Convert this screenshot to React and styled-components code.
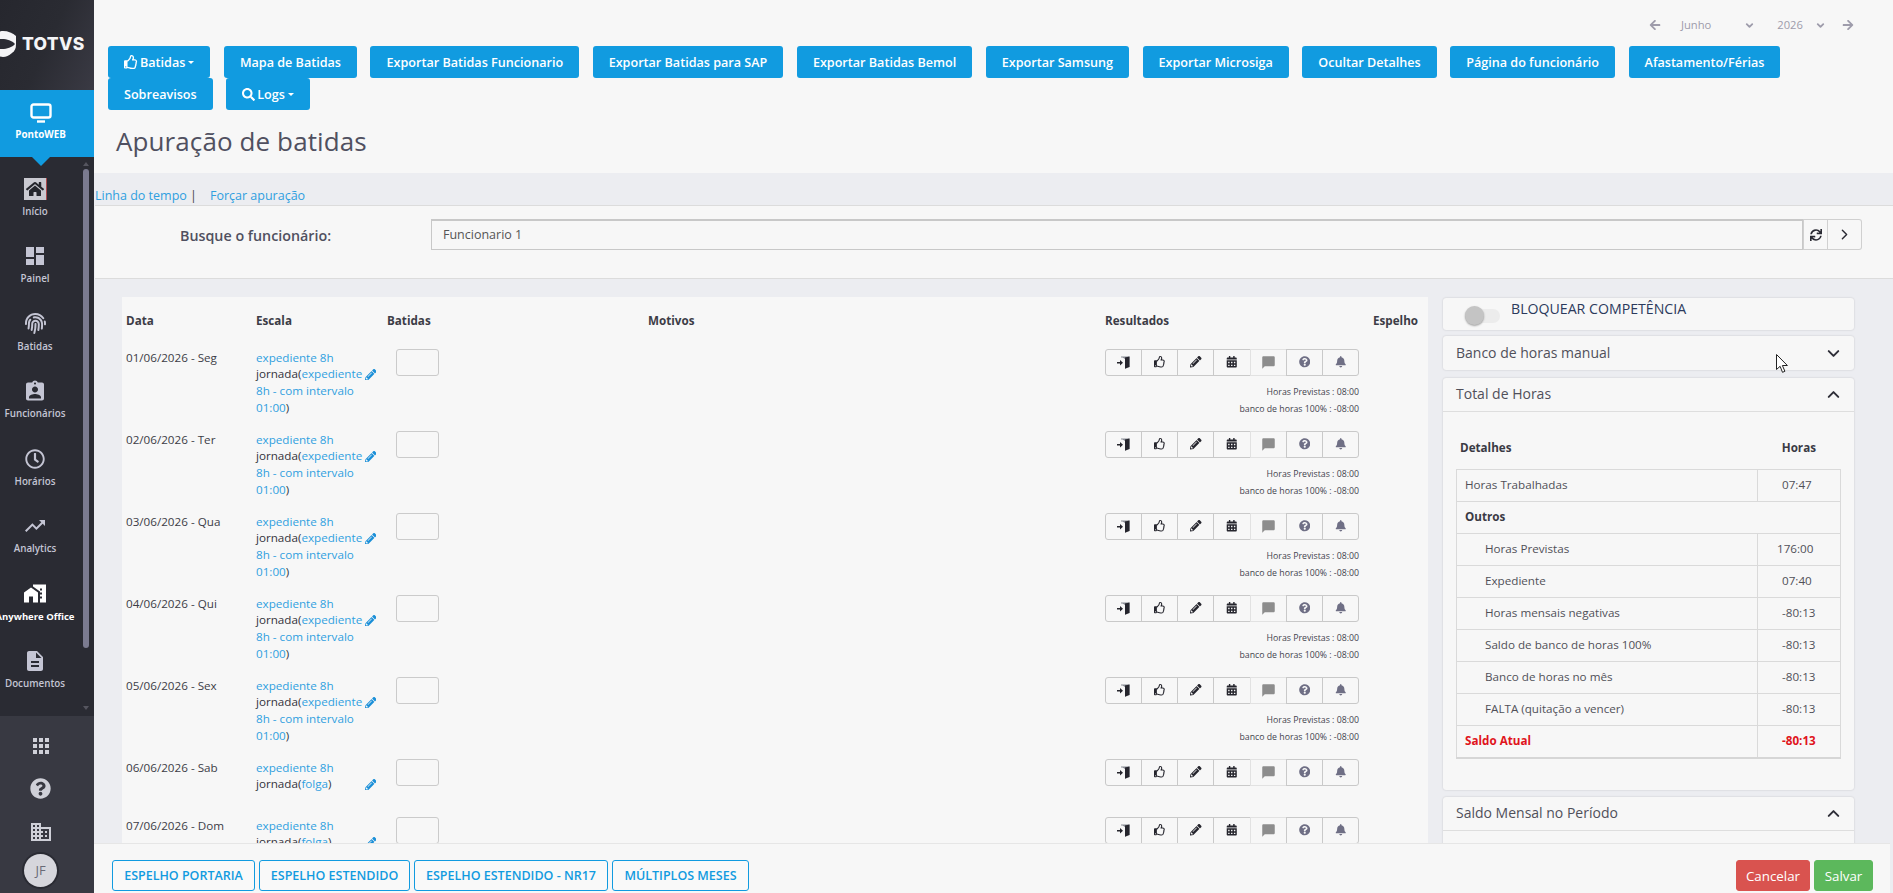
import React from "react";
import styled, { createGlobalStyle } from "styled-components";
import {
  FaHome, FaFingerprint, FaRegClock, FaQuestionCircle, FaRegThumbsUp, FaSearch, FaPencilAlt,
  FaCalendarAlt, FaBell, FaSync, FaArrowLeft, FaArrowRight,
} from "react-icons/fa";
import {
  MdDashboard, MdAssignmentInd, MdTrendingUp, MdHomeWork, MdDescription, MdApps, MdBusiness, MdChatBubble,
} from "react-icons/md";
import { FiChevronDown, FiChevronUp, FiChevronRight } from "react-icons/fi";

const BLUE = "#119be0";
const BAND = "#ecedf1";
const PAPER = "#f7f7f7";

const Global = createGlobalStyle`
  html, body { margin: 0; padding: 0; height: 100%; overflow: hidden; background: ${BAND}; }
  body { font-family: "Open Sans", "Liberation Sans", sans-serif; font-size: 11.67px; line-height: 16.67px; color: #333; }
  * { box-sizing: border-box; }
`;

const Page = styled.div`display: flex; width: 1893px; height: 893px; overflow: hidden;`;

/* ---------- sidebar ---------- */
const Sidebar = styled.aside`
  width: 94px; flex: none; height: 893px; display: flex; flex-direction: column; background: #2a2b33; position: relative; z-index: 2;
`;
const LogoBox = styled.div`
  height: 90px; flex: none; display: flex; align-items: flex-start; padding-top: 31px; overflow: hidden;
  background: linear-gradient(115deg, #26272e 0%, #2a2b32 50%, #3a3a44 100%);
`;
const LogoMark = styled.svg`width: 28px; height: 26px; flex: none; margin-left: -12px; color: #f4f4f6;`;
const LogoWord = styled.span`
  font-family: "Inter", "Liberation Sans", sans-serif; font-weight: 800; font-size: 17.5px; line-height: 26px; color: #f4f4f6; margin-left: 6px; letter-spacing: 0.3px;
`;
const ActiveItem = styled.div`
  height: 67px; flex: none; background: ${BLUE}; color: #fff; position: relative; display: flex; flex-direction: column; align-items: center; padding: 13px 13px 0 0;
  &::after {
    content: ""; position: absolute; left: 32px; bottom: -9px; border-left: 9px solid transparent; border-right: 9px solid transparent; border-top: 9px solid ${BLUE};
  }
`;
const ActiveLabel = styled.span`font-size: 9.8px; font-weight: 700; line-height: 13px; margin-top: 5px;`;
const Nav = styled.nav`flex: 1; position: relative; overflow: hidden; min-height: 0;`;
const NavItem = styled.div`
  width: 70px; height: 67.5px; display: flex; flex-direction: column; align-items: center; padding-top: 20.5px; color: ${p => (p.$bright ? "#fff" : "#c4c5d4")};
`;
const NavIcon = styled.span`
  width: 24px; height: 22px; display: flex; align-items: center; justify-content: center; font-size: ${p => p.$size || 22}px;
  ${p => p.$boxed && `background: #c9c9d1; color: #24252c; border-right: 1px solid #a8484c; width: 23px;`}
`;
const NavLabel = styled.span`
  font-size: ${p => (p.$bright ? 9.5 : 9.8)}px; font-weight: ${p => (p.$bright ? 700 : 600)}; line-height: 12px; margin-top: 6px; white-space: nowrap;
`;
const ScrollThumb = styled.div`
  position: absolute; left: 83px; top: 12px; width: 6px; height: 479px; border-radius: 3px; background: #7b7b90;
`;
const ScrollArrow = styled.div`
  position: absolute; left: 83px; ${p => p.$up ? "top: 5px; border-bottom: 4px solid #55555f;" : "bottom: 6px; border-top: 4px solid #55555f;"}
  border-left: 3px solid transparent; border-right: 3px solid transparent;
`;
const SideBottom = styled.div`
  height: 177px; flex: none; background: #383942; display: flex; flex-direction: column; align-items: center; padding: 8px 13px 0 0; color: #cfd0d8;
`;
const BottomIcon = styled.div`height: 43px; flex: none; display: flex; align-items: center; justify-content: center; font-size: ${p => p.$size || 22}px;`;
const Avatar = styled.div`
  width: 33px; height: 33px; flex: none; border-radius: 50%; background: #d6d6dc; color: #6a6a76; box-shadow: 0 0 0 2px #2a2b33;
  display: flex; align-items: center; justify-content: center; font-size: 13px; margin-top: 1px;
`;

/* ---------- main / header ---------- */
const Main = styled.main`flex: 1; min-width: 0; height: 893px; display: flex; flex-direction: column; background: ${BAND};`;
const Header = styled.header`height: 173px; flex: none; background: ${PAPER};`;
const Picker = styled.div`
  height: 46px; display: flex; align-items: flex-start; padding: 18px 0 0 1555px; color: #9e9cab; font-size: 11.2px; line-height: 14px;
`;
const PickIcon = styled.span`display: inline-flex; align-items: center; height: 14px; font-size: ${p => p.$size || 12}px; margin-left: ${p => p.$ml || 0}px;`;
const PickText = styled.span`margin-left: ${p => p.$ml || 0}px;`;
const Toolbar = styled.div`display: flex; flex-wrap: wrap; column-gap: 13.5px; padding: 0 100px 0 14px;`;
const ToolButton = styled.button`
  height: 32px; padding: 0 16px; border: 0; border-radius: 3px; background: ${BLUE}; color: #fff; font-family: inherit; font-size: 12.6px; font-weight: 600; white-space: nowrap;
  display: inline-flex; align-items: center; gap: 2px;
`;
const Caret = styled.span`
  display: inline-block; margin-left: 1px; border-left: 3px solid transparent; border-right: 3px solid transparent; border-top: 3px solid #fff;
`;
const Title = styled.h1`
  margin: 15px 0 0 22px; font-size: 26px; font-weight: 400; line-height: 33px; color: #505060; letter-spacing: 0.1px;
`;

/* ---------- body ---------- */
const Body = styled.div`flex: 1; min-height: 0; overflow: hidden;`;
const Links = styled.div`height: 32px; padding: 14px 0 0 1px; line-height: 17px; font-size: 12.5px; color: #444; white-space: nowrap;`;
const Link = styled.a`color: #2f9fe0; margin-left: ${p => p.$ml || 0}px;`;
const SearchCard = styled.section`
  height: 74px; margin-left: 1px; background: ${PAPER}; border-top: 1px solid #dcdcdc; border-bottom: 1px solid #dcdcdc; display: flex; align-items: flex-start; padding: 13px 31px 0 85px;
`;
const SearchLabel = styled.label`width: 251px; flex: none; font-size: 14.3px; font-weight: 600; line-height: 33px; color: #50505f;`;
const SearchInput = styled.div`
  flex: 1; height: 31px; border: 1px solid #c8c8c8; border-top-width: 2px; background: ${PAPER}; padding-left: 11px; line-height: 28px; font-size: 12.5px; color: #555;
`;
const AddOn = styled.div`
  width: ${p => p.$w}px; height: 31px; flex: none; border: 1px solid #d0d0d0; ${p => p.$last && "border-left: 0; border-radius: 0 3px 3px 0;"}
  display: flex; align-items: center; justify-content: center; color: #2a2a33; font-size: ${p => (p.$last ? 17 : 12)}px;
`;
const Columns = styled.div`display: flex; align-items: flex-start; gap: 15px; margin: 18px 0 0 28px; padding-right: 39px;`;
const TableCard = styled.section`flex: 1; min-width: 0; height: 600px; background: ${PAPER}; padding: 16px 0 0 4px;`;
const RowGrid = styled.div`display: grid; grid-template-columns: 130px 131px 261px 457px 268px 1fr;`;
const HeadRow = styled(RowGrid)`
  font-weight: 700; color: #3c3c46; padding-bottom: 20px;
`;
const DayRow = styled(RowGrid)`padding-bottom: 13.5px; min-height: 58px;`;
const DateCell = styled.div`color: #3c3c46;`;
const ScaleCell = styled.div`width: 121px; color: #33333b;`;
const Blue = styled.span`color: #2f9fe0;`;
const Pencil = styled.span`float: right; width: 13px; height: 16px; display: flex; align-items: center; justify-content: flex-end; color: #1a8fd8; font-size: 11.5px; margin: 0 1px 0 0;`;
const PunchBox = styled.div`width: 43px; height: 27px; margin: -1px 0 0 9px; border: 1px solid #cbcbcb; border-radius: 3px; background: ${PAPER};`;
const ResultCell = styled.div``;
const BtnGroup = styled.div`display: flex; width: 254px; height: 27px; margin-top: -1px;`;
const GroupBtn = styled.div`
  flex: 1; height: 27px; margin-left: -1px; border: 1px solid ${p => (p.$faint ? "#e2e2e2" : "#c9c9c9")}; background: ${PAPER}; color: ${p => p.$color || "#25252d"};
  display: flex; align-items: center; justify-content: center; font-size: 11.5px;
  &:first-child { margin-left: 0; border-radius: 3px 0 0 3px; }
  &:last-child { border-radius: 0 3px 3px 0; }
`;
const Summary = styled.div`margin-top: 8.5px; text-align: right; width: 254px; font-size: 8.75px; line-height: 17px; color: #44444e;`;

/* ---------- right column ---------- */
const Side = styled.div`width: 411px; flex: none; display: flex; flex-direction: column; gap: 6px; margin-top: 1px;`;
const Panel = styled.section`
  background: ${PAPER}; border-radius: 3px; box-shadow: 0 0 2px rgba(0,0,0,.18); position: relative;
  margin-top: ${p => p.$mt || 0}px;
`;
const ToggleRow = styled(Panel)`height: 32px; padding: 0 0 0 22px; display: flex; align-items: flex-start;`;
const Track = styled.span`
  width: 35px; height: 14px; margin-top: 11px; border-radius: 7px; background: #ececec; position: relative; flex: none;
`;
const Knob = styled.span`
  position: absolute; left: 0; top: -3px; width: 19px; height: 19px; border-radius: 50%; background: #c4c4c4; box-shadow: 0 1px 2px rgba(0,0,0,.35);
`;
const ToggleText = styled.span`margin-left: 11px; font-size: 14.15px; line-height: 22px; color: #2c3a5c; white-space: nowrap;`;
const PanelHead = styled.div`
  height: 34px; display: flex; align-items: center; justify-content: space-between; padding: 0 11px 0 13px; font-size: 14px; color: #50505a;
  ${p => p.$line && "border-bottom: 1px solid #dedede;"}
`;
const Chevron = styled.span`display: inline-flex; font-size: 19px; color: #2e2e38;`;
const PanelBody = styled.div`padding: 24px 13px 31px;`;
const DetailHead = styled.div`
  display: flex; justify-content: space-between; height: 24px; line-height: 24px; font-weight: 700; color: #3a3a44; padding: 0 25px 0 4px; margin-bottom: 9px;
`;
const Totals = styled.table`width: 385px; border-collapse: collapse; table-layout: fixed; border-bottom: 2px solid #d6d6d6;`;
const Tr = styled.tr`height: 32px;`;
const Td = styled.td`
  border: 1px solid #dadada; padding: 0 0 0 ${p => (p.$indent ? 28 : 8)}px; color: ${p => (p.$red ? "#e0141c" : "#505058")}; font-weight: ${p => (p.$bold ? 700 : 400)}; ${p => p.$bold && !p.$red && "color: #3a3a44;"}
`;
const TdVal = styled(Td)`width: 83px; padding: 0 0 0 ${p => p.$pl || 24}px;`;
const Cursor = styled.svg`position: absolute; left: 333px; top: 18px; width: 12px; height: 19px;`;

/* ---------- footer ---------- */
const Footer = styled.footer`
  height: 50px; flex: none; margin-right: 3px; background: ${PAPER}; border-top: 1px solid #e6e6e6; display: flex; align-items: flex-start; padding: 16px 17px 0 18px; gap: 4px;
`;
const OutlineBtn = styled.button`
  height: 31px; width: ${p => p.$w}px; padding: 0; border: 1px solid ${BLUE}; border-radius: 3px; background: #f9f9f9; color: ${BLUE}; font-family: inherit; font-size: 12.5px; font-weight: 600; white-space: nowrap;
`;
const Spacer = styled.span`flex: 1;`;
const SolidBtn = styled.button`
  height: 31px; width: ${p => p.$w}px; padding: 0; border: 1px solid ${p => p.$bg}; border-radius: 3px; background: ${p => p.$bg}; color: #fff; font-family: inherit; font-size: 13.33px;
`;

const Door = () => (
  <svg width="13" height="13" viewBox="0 0 13 13">
    <path d="M4 .5h8.500v10.500H9V12.500l-1-.5V3L5.500 1.500H4z" fill="#8a8d96" />
    <path d="M8 1.500l4.500-1V11L8 12.800z" fill="#25252d" />
    <path d="M0 6h3V4l3 2.700L3 9.400V7.500H0z" fill="#25252d" />
  </svg>
);

const days = [
  ["01/06/2026 - Seg", 1], ["02/06/2026 - Ter", 1], ["03/06/2026 - Qua", 1], ["04/06/2026 - Qui", 1], ["05/06/2026 - Sex", 1],
  ["06/06/2026 - Sab", 0], ["07/06/2026 - Dom", 0],
];

const navItems = [
  ["Início", <FaHome />, { boxed: true, size: 18 }],
  ["Painel", <MdDashboard />, { size: 24 }],
  ["Batidas", <FaFingerprint />, { size: 21 }],
  ["Funcionários", <MdAssignmentInd />, { size: 25 }],
  ["Horários", <FaRegClock />, { size: 20 }],
  ["Analytics", <MdTrendingUp />, { size: 24 }],
  ["Anywhere Office", <MdHomeWork />, { size: 25, bright: true }],
  ["Documentos", <MdDescription />, { size: 24 }],
];

const details = [
  ["Horas Previstas", "176:00", 19],
  ["Expediente", "07:40", 24],
  ["Horas mensais negativas", "-80:13", 24],
  ["Saldo de banco de horas 100%", "-80:13", 24],
  ["Banco de horas no mês", "-80:13", 24],
  ["FALTA (quitação a vencer)", "-80:13", 24],
];

export default function App() {
  return (
    <Page>
      <Global />
      <Sidebar>
        <LogoBox>
          <LogoMark viewBox="-12 0 28 26">
            <path d="M3 0c5 0 10 2 13 5v8.500c0 4-1 6-4 8.500-3 2.500-6 4-9 4-6 0-15-6-15-13S-3 0 3 0z" fill="currentColor" />
            <path d="M-12 13C-8 9-3 8 2 8c5 0 10 1.500 13 5-3 3.500-8 5-13 5-5 0-10-1-14-5z" fill="#2a2b33" />
          </LogoMark>
          <LogoWord>TOTVS</LogoWord>
        </LogoBox>
        <ActiveItem>
          <svg width="22" height="20" viewBox="0 0 22 20" fill="none" stroke="#fff" strokeWidth="2.4">
            <rect x="1.500" y="1.500" width="19" height="13" rx="2" />
            <path d="M7 18.500h8" />
          </svg>
          <ActiveLabel>PontoWEB</ActiveLabel>
        </ActiveItem>
        <Nav>
          {navItems.map(([label, icon, o]) => (
            <NavItem key={label} $bright={o.bright}>
              <NavIcon $boxed={o.boxed} $size={o.size}>{icon}</NavIcon>
              <NavLabel $bright={o.bright}>{label}</NavLabel>
            </NavItem>
          ))}
          <ScrollArrow $up />
          <ScrollThumb />
          <ScrollArrow />
        </Nav>
        <SideBottom>
          <BottomIcon $size={24}><MdApps /></BottomIcon>
          <BottomIcon $size={21}><FaQuestionCircle /></BottomIcon>
          <BottomIcon $size={24}><MdBusiness /></BottomIcon>
          <Avatar>JF</Avatar>
        </SideBottom>
      </Sidebar>

      <Main>
        <Header>
          <Picker>
            <PickIcon><FaArrowLeft /></PickIcon>
            <PickText $ml={20}>Junho</PickText>
            <PickIcon $ml={33} $size={11}><FiChevronDown strokeWidth={4} /></PickIcon>
            <PickText $ml={22}>2026</PickText>
            <PickIcon $ml={12} $size={11}><FiChevronDown strokeWidth={4} /></PickIcon>
            <PickIcon $ml={16}><FaArrowRight /></PickIcon>
          </Picker>
          <Toolbar>
            <ToolButton><FaRegThumbsUp size={14} />Batidas<Caret /></ToolButton>
            <ToolButton>Mapa de Batidas</ToolButton>
            <ToolButton>Exportar Batidas Funcionario</ToolButton>
            <ToolButton>Exportar Batidas para SAP</ToolButton>
            <ToolButton>Exportar Batidas Bemol</ToolButton>
            <ToolButton>Exportar Samsung</ToolButton>
            <ToolButton>Exportar Microsiga</ToolButton>
            <ToolButton>Ocultar Detalhes</ToolButton>
            <ToolButton>Página do funcionário</ToolButton>
            <ToolButton>Afastamento/Férias</ToolButton>
            <ToolButton>Sobreavisos</ToolButton>
            <ToolButton><FaSearch size={13} />Logs<Caret /></ToolButton>
          </Toolbar>
          <Title>Apuração de batidas</Title>
        </Header>

        <Body>
          <Links>
            <Link>Linha do tempo</Link> |<Link $ml={13}>Forçar apuração</Link>
          </Links>
          <SearchCard>
            <SearchLabel>Busque o funcionário:</SearchLabel>
            <SearchInput>Funcionario 1</SearchInput>
            <AddOn $w={25}><FaSync /></AddOn>
            <AddOn $w={34} $last><FiChevronRight /></AddOn>
          </SearchCard>

          <Columns>
            <TableCard>
              <HeadRow>
                <div>Data</div><div>Escala</div><div>Batidas</div><div>Motivos</div><div>Resultados</div><div>Espelho</div>
              </HeadRow>
              {days.map(([d, full]) => (
                <DayRow key={d}>
                  <DateCell>{d}</DateCell>
                  <ScaleCell>
                    <div><Blue>expediente 8h</Blue></div>
                    <div>
                      <Pencil><FaPencilAlt /></Pencil>
                      jornada(<Blue>{full ? "expediente 8h - com intervalo 01:00" : "folga"}</Blue>)
                    </div>
                  </ScaleCell>
                  <div><PunchBox /></div>
                  <div />
                  <ResultCell>
                    <BtnGroup>
                      <GroupBtn><Door /></GroupBtn>
                      <GroupBtn><FaRegThumbsUp /></GroupBtn>
                      <GroupBtn><FaPencilAlt /></GroupBtn>
                      <GroupBtn><FaCalendarAlt /></GroupBtn>
                      <GroupBtn $faint $color="#8d8d8d"><MdChatBubble size={15} /></GroupBtn>
                      <GroupBtn $color="#6f6f85"><FaQuestionCircle /></GroupBtn>
                      <GroupBtn $color="#6f6f85"><FaBell /></GroupBtn>
                    </BtnGroup>
                    {full ? (
                      <Summary>Horas Previstas : 08:00<br />banco de horas 100% : -08:00</Summary>
                    ) : null}
                  </ResultCell>
                  <div />
                </DayRow>
              ))}
            </TableCard>

            <Side>
              <ToggleRow>
                <Track><Knob /></Track>
                <ToggleText>BLOQUEAR COMPETÊNCIA</ToggleText>
              </ToggleRow>
              <Panel>
                <PanelHead>Banco de horas manual<Chevron><FiChevronDown strokeWidth={2.5} /></Chevron></PanelHead>
                <Cursor viewBox="0 0 12 19">
                  <path d="M.5.5v15l3.600-3.200 2.400 6 2.400-1-2.500-5.800h5z" fill="#fff" stroke="#222" strokeWidth="1" />
                </Cursor>
              </Panel>
              <Panel $mt={2}>
                <PanelHead $line>Total de Horas<Chevron><FiChevronUp strokeWidth={2.5} /></Chevron></PanelHead>
                <PanelBody>
                  <DetailHead><span>Detalhes</span><span>Horas</span></DetailHead>
                  <Totals>
                    <tbody>
                      <Tr><Td>Horas Trabalhadas</Td><TdVal>07:47</TdVal></Tr>
                      <Tr><Td colSpan={2} $bold>Outros</Td></Tr>
                      {details.map(([k, v, pl]) => (
                        <Tr key={k}><Td $indent>{k}</Td><TdVal $pl={pl}>{v}</TdVal></Tr>
                      ))}
                      <Tr><Td $bold $red>Saldo Atual</Td><TdVal $bold $red>-80:13</TdVal></Tr>
                    </tbody>
                  </Totals>
                </PanelBody>
              </Panel>
              <Panel $mt={1}>
                <PanelHead $line>Saldo Mensal no Período<Chevron><FiChevronUp strokeWidth={2.5} /></Chevron></PanelHead>
                <PanelBody />
              </Panel>
            </Side>
          </Columns>
        </Body>

        <Footer>
          <OutlineBtn $w={143}>ESPELHO PORTARIA</OutlineBtn>
          <OutlineBtn $w={151}>ESPELHO ESTENDIDO</OutlineBtn>
          <OutlineBtn $w={194}>ESPELHO ESTENDIDO - NR17</OutlineBtn>
          <OutlineBtn $w={137}>MÚLTIPLOS MESES</OutlineBtn>
          <Spacer />
          <SolidBtn $w={74} $bg="#d9534f">Cancelar</SolidBtn>
          <SolidBtn $w={59} $bg="#5cb85c">Salvar</SolidBtn>
        </Footer>
      </Main>
    </Page>
  );
}
